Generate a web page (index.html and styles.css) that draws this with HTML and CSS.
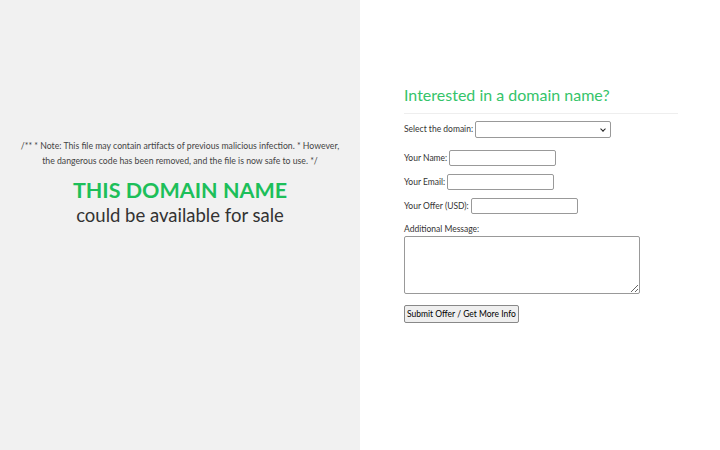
FILE: index.html
```html
<!DOCTYPE html>
<html>
<head>
  <meta charset="UTF-8">
  <title>Domain for sale</title>
  <link rel="stylesheet" href="styles.css">
</head>
<body>
  <div class="split">
    <div class="left">
      <p class="note">/** * Note: This file may contain artifacts of previous malicious infection. * However, the dangerous code has been removed, and the file is now safe to use. */</p>
      <h1 class="title">THIS DOMAIN NAME</h1>
      <div class="subtitle">could be available for sale</div>
    </div>
    <div class="right">
      <div class="box">
        <h2>Interested in a domain name?</h2>
        <form class="offer">
          <div class="row first">
            <label for="domain">Select the domain:</label>
            <span class="sel-wrap"><select id="domain" class="sel"></select></span>
          </div>
          <div class="row">
            <label for="name">Your Name:</label>
            <input type="text" id="name">
          </div>
          <div class="row">
            <label for="email">Your Email:</label>
            <input type="text" id="email">
          </div>
          <div class="row">
            <label for="offer">Your Offer (USD):</label>
            <input type="text" id="offer">
          </div>
          <div class="row stack">
            <label for="msg">Additional Message:</label>
            <textarea id="msg"></textarea>
          </div>
          <button type="button" class="submit">Submit Offer / Get More Info</button>
        </form>
      </div>
    </div>
  </div>
</body>
</html>
```
FILE: styles.css
```css
body {
  margin: 0;
  font-family: Lato, 'Open Sans', Arial, sans-serif;
  color: #333;
}
.split {
  display: flex;
  height: 100vh;
}
.left {
  width: 50%;
  background-color: #f1f1f1;
  display: flex;
  flex-direction: column;
  justify-content: center;
  align-items: center;
  text-align: center;
  padding: 0 16px 85px;
  box-sizing: border-box;
}
.note {
  font-size: 8.7px;
  line-height: 15px;
  margin: 0 0 9px;
  color: #444;
}
.title {
  color: #1dbf5a;
  font-size: 21.5px;
  font-weight: bold;
  margin: 0;
  line-height: 26px;
}
.subtitle {
  font-size: 18.5px;
  line-height: 24px;
  color: #333;
}
.right {
  width: 50%;
  background-color: #fff;
  display: flex;
  flex-direction: column;
  justify-content: center;
  padding: 0 42px 42px 44px;
  box-sizing: border-box;
}
.box h2 {
  color: #35c46a;
  font-weight: normal;
  font-size: 16px;
  margin: 0 0 7px;
  padding-bottom: 9px;
  border-bottom: 1px solid #eee;
}
.offer {
  font-size: 8.5px;
}
.row {
  display: flex;
  align-items: center;
  margin-bottom: 8px;
}
.first {
  margin-bottom: 12px;
}
.row label {
  margin-right: 2px;
}
.row input[type="text"] {
  width: 107px;
  height: 16px;
  box-sizing: border-box;
  border: 1px solid #999;
  border-radius: 2px;
}
/* small chevron instead of the native arrow */
.sel-wrap {
  position: relative;
  display: inline-block;
  height: 17px;
}
.sel-wrap::after {
  content: "";
  position: absolute;
  right: 6px;
  top: 6px;
  width: 3px;
  height: 3px;
  border-right: 1.5px solid #222;
  border-bottom: 1.5px solid #222;
  transform: rotate(45deg);
  pointer-events: none;
}
.sel {
  appearance: none;
  width: 136px;
  height: 17px;
  border: 1px solid #999;
  border-radius: 2px;
  background-color: #fff;
  margin: 0;
  display: block;
}
.stack {
  flex-direction: column;
  align-items: flex-start;
  margin-top: 10.5px;
}
.stack label {
  margin-bottom: 2px;
}
textarea {
  width: 236px;
  height: 58px;
  box-sizing: border-box;
  border: 1px solid #999;
  border-radius: 2px;
  resize: vertical;
}
.submit {
  margin-top: 3px;
  font-family: inherit;
  font-size: 8.5px;
  padding: 3px 2px;
  border: 1px solid #888;
  border-radius: 2px;
  background-color: #efefef;
}
```
